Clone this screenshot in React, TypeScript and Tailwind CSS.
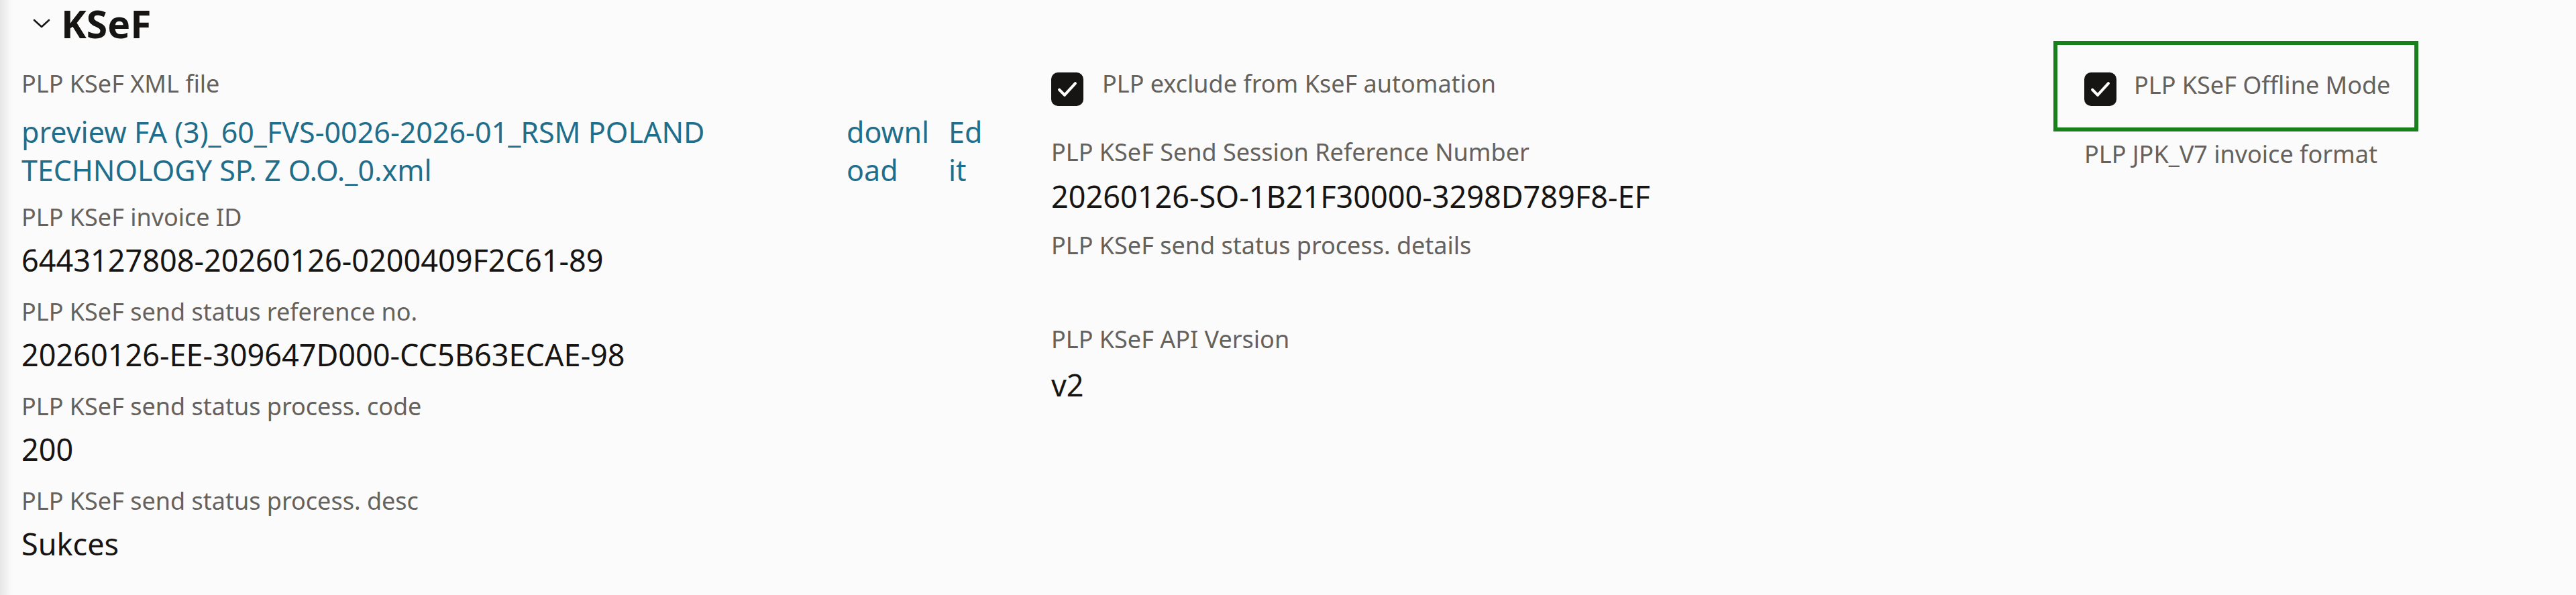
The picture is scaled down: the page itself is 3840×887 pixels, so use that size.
import React from 'react';

const labelCls = "text-[36px] leading-[50px] text-[#65615c]";
const valueCls = "mt-[9px] text-[45px] leading-[60px] text-[#161513]";

function Field({ label, value }: { label: string; value?: string }) {
  return (
    <div className="pb-[22px]">
      <div className={labelCls}>{label}</div>
      <div className={valueCls}>{value}</div>
    </div>
  );
}

function Check() {
  return (
    <span className="flex h-[50px] w-[48px] shrink-0 items-center justify-center rounded-[10px] bg-[#161513]">
      <svg width="38" height="38" viewBox="0 0 24 24" fill="none" stroke="#ffffff" strokeWidth="2.6" strokeLinecap="round" strokeLinejoin="round">
        <path d="M4.5 12.5l5 5L19.5 6.5" />
      </svg>
    </span>
  );
}

export default function App() {
  return (
    <div
      className="min-h-[887px] w-[3840px] bg-[linear-gradient(to_right,#e6e6e6_0px,#fbfbfb_18px)] pl-[32px]"
      style={{ fontFamily: '"Noto Sans", "Open Sans", sans-serif' }}
    >
      {/* section header */}
      <div className="flex h-[64px] items-center pt-[6px]">
        <svg width="28" height="18" viewBox="0 0 28 18" fill="none" stroke="#161513" strokeWidth="2.6" strokeLinecap="round" strokeLinejoin="round" className="ml-[16px]">
          <path d="M3 4l11 10L25 4" />
        </svg>
        <h2 className="ml-[15px] text-[57px] font-bold leading-[64px] text-[#161513]">KSeF</h2>
      </div>

      <div className="mt-[36px] grid grid-cols-[1535px_1540px_1fr]">
        {/* column 1 */}
        <div>
          <div className="pb-[17px]">
            <div className={labelCls}>PLP KSeF XML file</div>
            <div className="mt-[18px] flex text-[43px] leading-[57px] text-[#1f6e8c]">
              <a href="#" className="w-[1230px] pr-[80px]">
                preview FA (3)_60_FVS-0026-2026-01_RSM POLAND TECHNOLOGY SP. Z O.O._0.xml
              </a>
              <a href="#" className="w-[152px]">
                downl<br />oad
              </a>
              <a href="#">
                Ed<br />it
              </a>
            </div>
          </div>
          <Field label="PLP KSeF invoice ID" value="6443127808-20260126-0200409F2C61-89" />
          <Field label="PLP KSeF send status reference no." value="20260126-EE-309647D000-CC5B63ECAE-98" />
          <Field label="PLP KSeF send status process. code" value="200" />
          <Field label="PLP KSeF send status process. desc" value="Sukces" />
        </div>

        {/* column 2 */}
        <div>
          <label className="flex items-start gap-[28px]">
            <span className="mt-[8px]"><Check /></span>
            <span className={labelCls}>PLP exclude from KseF automation</span>
          </label>
          <div className="mt-[44px]">
            <div className={labelCls}>PLP KSeF Send Session Reference Number</div>
            <div className="mt-[11px] text-[45px] leading-[60px] text-[#161513]">20260126-SO-1B21F30000-3298D789F8-EF</div>
          </div>
          <div className={`mt-[18px] ${labelCls}`}>PLP KSeF send status process. details</div>
          <div className="mt-[90px]">
            <div className={labelCls}>PLP KSeF API Version</div>
            <div className="mt-[13px] text-[45px] leading-[60px] text-[#161513]">v2</div>
          </div>
        </div>

        {/* column 3 */}
        <div className="pt-[2px]">
          <div className="relative">
            <div className="pointer-events-none absolute left-[-46px] top-[-41px] h-[135px] w-[544px] border-[6px] border-[#17801a]" />
            <label className="flex items-start gap-[26px]">
              <span className="mt-[6px]"><Check /></span>
              <span className={labelCls}>PLP KSeF Offline Mode</span>
            </label>
          </div>
          <div className={`mt-[47px] ${labelCls}`}>PLP JPK_V7 invoice format</div>
        </div>
      </div>
    </div>
  );
}
